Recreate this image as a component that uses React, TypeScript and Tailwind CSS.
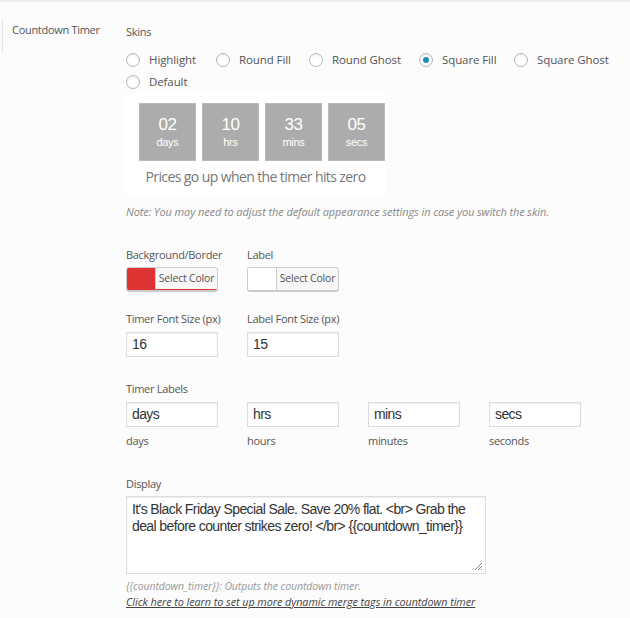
import React from "react";

const ui = { fontFamily: '"Open Sans", "Noto Sans", sans-serif' };
const arial = { fontFamily: '"Liberation Sans", Arial, sans-serif' };

function Radio({ label, checked, w }: { label: string; checked?: boolean; w: string }) {
  return (
    <div className={`flex items-center whitespace-nowrap ${w}`}>
      <span className="w-[14px] h-[14px] shrink-0 rounded-full border border-[#b4b9be] bg-white shadow-[inset_0_1px_2px_rgba(0,0,0,0.1)] flex items-center justify-center">
        {checked && <span className="w-[6px] h-[6px] rounded-full bg-[#1e8cbe]" />}
      </span>
      <span className="ml-[9px] text-[11.5px] leading-[22px] tracking-[-0.1px] text-[#555]">{label}</span>
    </div>
  );
}

function Box({ n, l }: { n: string; l: string }) {
  return (
    <div className="w-[57px] h-[58px] bg-[#acacac] border border-[#b8b8b8] flex flex-col items-center justify-center text-white" style={arial}>
      <span className="text-[17px] leading-[18px] tracking-[-0.4px]">{n}</span>
      <span className="text-[11px] leading-[14px] mt-[1px] tracking-[-0.3px]">{l}</span>
    </div>
  );
}

function ColorBtn({ color, red }: { color: string; red?: boolean }) {
  return (
    <div className="w-[92px] h-[24px] flex rounded-[3px] border border-[#ccc] overflow-hidden shadow-[0_1px_0_#ccc] bg-[#f7f7f7]">
      <div className="w-[28px] h-full" style={{ background: color }} />
      <div className={`flex-1 flex items-center justify-center border-l border-[#ccc] text-[10.5px] tracking-[-0.2px] text-[#555] whitespace-nowrap ${red ? "border-b border-b-[#dd3333]" : ""}`}>
        Select Color
      </div>
    </div>
  );
}

function Input({ v }: { v: string }) {
  return (
    <div className="w-[92px] h-[25px] border border-[#ddd] bg-white shadow-[inset_0_1px_2px_rgba(0,0,0,0.07)] flex items-center pl-[5px] text-[14px] tracking-[-0.6px] text-[#333]" style={arial}>
      {v}
    </div>
  );
}

const lbl = "text-[11px] leading-[16px] tracking-[-0.3px] text-[#555] whitespace-nowrap";

export default function App() {
  return (
    <div className="w-[630px] min-h-[618px] bg-[#fcfcfc] border-t-2 border-[#ececec] flex" style={ui}>
      <div className="w-[126px] shrink-0 pl-[2px] pt-[18px]">
        <div className="border-l border-[#e2e2e2] h-[33px] pl-[9px] pt-[2px] text-[11px] leading-[16px] tracking-[-0.3px] text-[#555] whitespace-nowrap">
          Countdown Timer
        </div>
      </div>
      <div className="flex-1 flex flex-col pt-[22px]">
        <div className={lbl}>Skins</div>
        <div className="mt-[9px] flex">
          <Radio label="Highlight" w="w-[90px]" />
          <Radio label="Round Fill" w="w-[93px]" />
          <Radio label="Round Ghost" w="w-[110px]" />
          <Radio label="Square Fill" w="w-[95px]" checked />
          <Radio label="Square Ghost" w="w-[90px]" />
        </div>
        <div className="flex">
          <Radio label="Default" w="w-[90px]" />
        </div>
        <div className="w-[261px] h-[103px] bg-white ml-[-1px] pt-[10px] flex flex-col">
          <div className="flex gap-[6px] pl-[14px]">
            <Box n="02" l="days" />
            <Box n="10" l="hrs" />
            <Box n="33" l="mins" />
            <Box n="05" l="secs" />
          </div>
          <div className="text-center mt-[6px] text-[14px] leading-[20px] tracking-[-0.6px] text-[#777] whitespace-nowrap">
            Prices go up when the timer hits zero
          </div>
        </div>
        <div className="mt-[9px] text-[11px] leading-[14px] tracking-[-0.1px] italic text-[#888] whitespace-nowrap">
          Note: You may need to adjust the default appearance settings in case you switch the skin.
        </div>

        <div className={`mt-[28px] grid grid-cols-[121px_121px] ${lbl}`}>
          <div>Background/Border</div>
          <div>Label</div>
        </div>
        <div className="mt-[4px] grid grid-cols-[121px_121px]">
          <ColorBtn color="#dd3333" red />
          <ColorBtn color="#ffffff" />
        </div>

        <div className={`mt-[20px] grid grid-cols-[121px_121px] ${lbl}`}>
          <div>Timer Font Size (px)</div>
          <div>Label Font Size (px)</div>
        </div>
        <div className="mt-[5px] grid grid-cols-[121px_121px]">
          <Input v="16" />
          <Input v="15" />
        </div>

        <div className={`mt-[24px] ${lbl}`}>Timer Labels</div>
        <div className="mt-[5px] grid grid-cols-[121px_121px_121px_121px]">
          <Input v="days" />
          <Input v="hrs" />
          <Input v="mins" />
          <Input v="secs" />
        </div>
        <div className={`mt-[6px] grid grid-cols-[121px_121px_121px_121px] ${lbl}`}>
          <div>days</div>
          <div>hours</div>
          <div>minutes</div>
          <div>seconds</div>
        </div>

        <div className={`mt-[27px] ${lbl}`}>Display</div>
        <div className="mt-[4px] relative w-[360px] h-[78px] border border-[#ddd] bg-white shadow-[inset_0_1px_2px_rgba(0,0,0,0.07)] pl-[5px] pt-[4px] pr-[14px] text-[14px] leading-[17px] tracking-[-0.6px] text-[#333]" style={arial}>
          It's Black Friday Special Sale. Save 20% flat. &lt;br&gt; Grab the deal before counter strikes zero! &lt;/br&gt; {"{{countdown_timer}}"}
          <svg className="absolute right-[2px] bottom-[2px]" width="9" height="9" viewBox="0 0 9 9">
            <path d="M8 1L1 8M8 4L4 8M8 7L7 8" stroke="#888" strokeWidth="1" />
          </svg>
        </div>
        <div className="mt-[5px] text-[10.5px] leading-[14px] tracking-[-0.1px] italic text-[#999] whitespace-nowrap">
          {"{{countdown_timer}}"}: Outputs the countdown timer.
        </div>
        <div className="mt-[2px] text-[10.8px] leading-[14px] tracking-[-0.05px] italic underline text-[#444] whitespace-nowrap">
          Click here to learn to set up more dynamic merge tags in countdown timer
        </div>
      </div>
    </div>
  );
}
